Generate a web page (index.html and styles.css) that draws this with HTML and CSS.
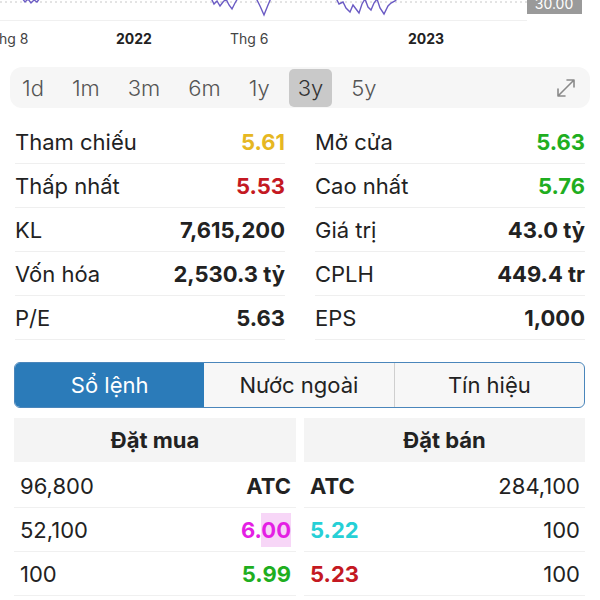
FILE: index.html
```html
<!DOCTYPE html>
<html lang="vi">
<head>
<meta charset="utf-8">
<link rel="stylesheet" href="styles.css">
</head>
<body>
<div class="chart">
  <svg class="plot" width="600" height="22" viewBox="0 0 600 22">
    <line x1="0" y1="2" x2="527" y2="2" stroke="#c8c8c8" stroke-width="1" stroke-dasharray="2 3"/>
    <line x1="0" y1="20.5" x2="527" y2="20.5" stroke="#f0f0f0" stroke-width="1"/>
    <polyline fill="none" stroke="#6b5bc4" stroke-width="1.4" points="22,-2 25,2 28,-1 31,3 34,0 37,2 40,-2"/>
    <polyline fill="none" stroke="#6b5bc4" stroke-width="1.4" points="211,-2 214,4 217,1 220,6 223,2 226,-1 229,5 232,9 235,3 238,-2"/>
    <polyline fill="none" stroke="#6b5bc4" stroke-width="1.4" points="256,-2 260,6 264,15 268,5 271,-2"/>
    <polyline fill="none" stroke="#6b5bc4" stroke-width="1.4" points="336,-2 339,4 343,2 346,8 350,12 353,5 356,9 359,13 362,4 365,-1 368,7 371,10 374,3 377,-1 380,8 384,14 388,6 391,3 395,1 398,-2"/>
    <rect x="527" y="-6" width="55" height="20" fill="#9a9a9a"/>
    <text x="554" y="9" text-anchor="middle" class="pricetag">30.00</text>
  </svg>
  <div class="axis">
    <span class="ax ax-a">Thg 8</span>
    <span class="ax ax-b yr">2022</span>
    <span class="ax ax-c">Thg 6</span>
    <span class="ax ax-d yr">2023</span>
  </div>
</div>

<div class="periods">
  <span class="per">1d</span>
  <span class="per">1m</span>
  <span class="per">3m</span>
  <span class="per">6m</span>
  <span class="per">1y</span>
  <span class="per active">3y</span>
  <span class="per">5y</span>
  <span class="spacer"></span>
  <svg class="expand" width="22" height="22" viewBox="0 0 22 22">
    <path d="M3 19 L19 3 M12 3 H19 V10 M3 12 V19 H10" fill="none" stroke="#8a8a8a" stroke-width="1.6" stroke-linecap="round" stroke-linejoin="round"/>
  </svg>
</div>

<div class="stats">
  <div class="col">
    <div class="row"><span class="lbl">Tham chiếu</span><span class="val ref">5.61</span></div>
    <div class="row"><span class="lbl">Thấp nhất</span><span class="val down">5.53</span></div>
    <div class="row"><span class="lbl">KL</span><span class="val">7,615,200</span></div>
    <div class="row"><span class="lbl">Vốn hóa</span><span class="val">2,530.3 tỷ</span></div>
    <div class="row"><span class="lbl">P/E</span><span class="val">5.63</span></div>
  </div>
  <div class="col">
    <div class="row"><span class="lbl">Mở cửa</span><span class="val up">5.63</span></div>
    <div class="row"><span class="lbl">Cao nhất</span><span class="val up">5.76</span></div>
    <div class="row"><span class="lbl">Giá trị</span><span class="val">43.0 tỷ</span></div>
    <div class="row"><span class="lbl">CPLH</span><span class="val">449.4 tr</span></div>
    <div class="row"><span class="lbl">EPS</span><span class="val">1,000</span></div>
  </div>
</div>

<div class="tabs">
  <div class="tab selected">Sổ lệnh</div>
  <div class="tab">Nước ngoài</div>
  <div class="tab last">Tín hiệu</div>
</div>

<div class="book">
  <div class="side">
    <div class="head">Đặt mua</div>
    <div class="orow"><span class="qty">96,800</span><span class="px atc">ATC</span></div>
    <div class="orow"><span class="qty">52,100</span><span class="px ceil">6.<span class="flash">00</span></span></div>
    <div class="orow"><span class="qty">100</span><span class="px up">5.99</span></div>
  </div>
  <div class="side">
    <div class="head">Đặt bán</div>
    <div class="orow"><span class="px atc">ATC</span><span class="qty">284,100</span></div>
    <div class="orow"><span class="px floor">5.22</span><span class="qty">100</span></div>
    <div class="orow"><span class="px down">5.23</span><span class="qty">100</span></div>
  </div>
</div>
</body>
</html>
```
FILE: styles.css
```css
* { box-sizing: border-box; }
html, body {
  margin: 0;
  padding: 0;
  background: #ffffff;
  font-family: "Inter", "Liberation Sans", sans-serif;
  color: #222;
  width: 600px;
  height: 600px;
  overflow: hidden;
}

.chart { height: 58px; }
.plot { display: block; }
.pricetag { font-size: 14px; fill: #ffffff; font-family: "Inter", "Liberation Sans", sans-serif; }
.axis {
  position: relative;
  height: 36px;
  font-size: 14px;
  color: #444;
}
.ax { position: absolute; top: 8px; white-space: nowrap; }
.ax-a { left: -10px; }
.ax-b { left: 116px; }
.ax-c { left: 230px; }
.ax-d { left: 408px; }
.yr { font-weight: 700; color: #222; }

.periods {
  display: flex;
  align-items: center;
  margin: 9px 10px 0 10px;
  height: 41px;
  padding: 0 0 0 3px;
  background: #f6f6f6;
  border-radius: 12px;
  gap: 10px;
}
.per {
  font-size: 22px;
  font-weight: 300;
  color: #555;
  padding: 0 9px;
  height: 38px;
  line-height: 38px;
  border-radius: 5px;
}
.per.active { background: #c9c9c9; color: #333; }
.spacer { flex: 1; }
.expand { margin-right: 13px; }

.stats {
  display: grid;
  grid-template-columns: 270px 270px;
  column-gap: 30px;
  margin: 12px 15px 0 15px;
}
.row {
  display: flex;
  justify-content: space-between;
  align-items: center;
  height: 44px;
  border-bottom: 1px solid #efefef;
  font-size: 22px;
}
.lbl { font-weight: 400; color: #222; }
.val { font-weight: 700; color: #222; }
.ref { color: #e6b722; }
.down { color: #c41922; }
.up { color: #1fae1f; }
.ceil { color: #e41fe4; }
.floor { color: #26d0d6; }

.tabs {
  display: flex;
  margin: 22px 15px 0 14px;
  height: 46px;
  border: 1px solid #4a86bb;
  border-radius: 6px;
  overflow: hidden;
  background: #f7f7f7;
}
.tab {
  flex: 1;
  display: flex;
  align-items: center;
  justify-content: center;
  font-size: 22px;
  color: #222;
}
.tab.selected { background: #2b7bb9; color: #ffffff; }
.tab.last { border-left: 1px solid #cfcfcf; }

.book {
  display: grid;
  grid-template-columns: 282px 281px;
  column-gap: 8px;
  margin: 10px 15px 0 14px;
}
.head {
  height: 44px;
  background: #f4f4f4;
  display: flex;
  align-items: center;
  justify-content: center;
  font-size: 22px;
  font-weight: 700;
  color: #222;
  margin-bottom: 2px;
}
.orow {
  display: flex;
  justify-content: space-between;
  align-items: center;
  height: 44px;
  border-bottom: 1px solid #f0f0f0;
  padding: 0 5px 0 6px;
  font-size: 22px;
}
.qty { font-weight: 400; color: #222; }
.px { font-weight: 700; }
.atc { color: #222; }
.flash { background: #f7d6f7; padding: 4px 0; }
```
